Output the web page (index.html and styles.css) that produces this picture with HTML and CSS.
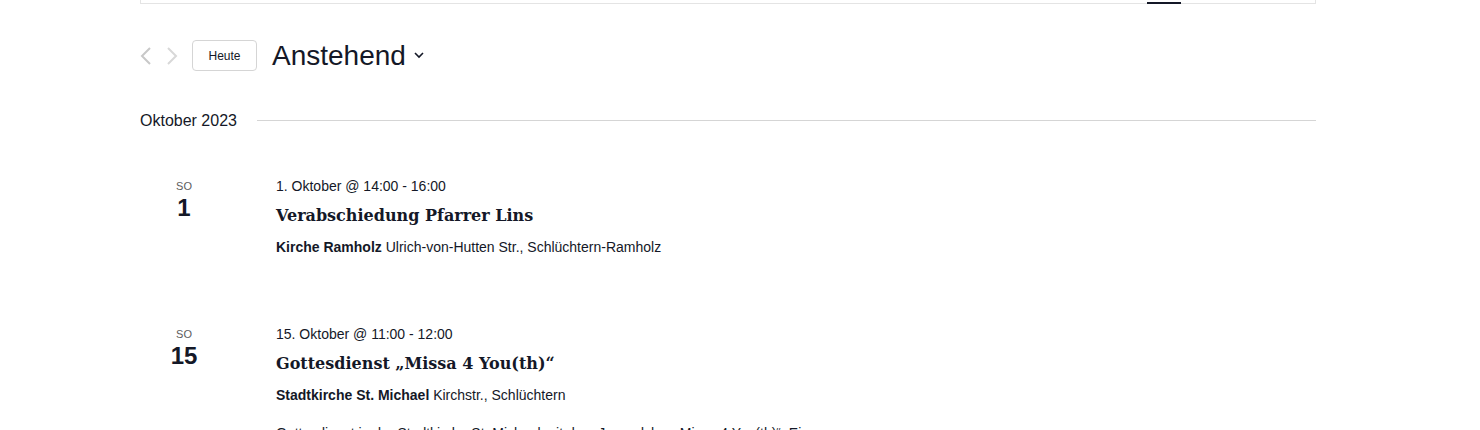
FILE: index.html
```html
<html>
    <head>
        <title>Veranstaltungen</title>
        <link rel="stylesheet" href="styles.css">
    </head>
    <body>
        <div class="events">

            <div class="bar">
                <span class="bar-active"></span>
            </div>

            <div class="nav">
                <a class="arrow prev" href="#"><svg width="12" height="18" viewBox="0 0 12 18"><path d="M10 1 L2 9 L10 17" fill="none" stroke="#c8c8c8" stroke-width="2"/></svg></a>
                <a class="arrow next" href="#"><svg width="12" height="18" viewBox="0 0 12 18"><path d="M2 1 L10 9 L2 17" fill="none" stroke="#d8d8d8" stroke-width="2"/></svg></a>
                <a class="today" href="#">Heute</a>
                <span class="range">Anstehend <svg width="10" height="7" viewBox="0 0 10 7"><path d="M1 1 L5 5 L9 1" fill="none" stroke="#141827" stroke-width="1.6"/></svg></span>
            </div>

            <div class="month">
                <span class="month-name">Oktober 2023</span>
                <span class="month-line"></span>
            </div>

            <div class="event">
                <div class="day">
                    <span class="weekday">So</span>
                    <span class="daynum">1</span>
                </div>
                <div class="details">
                    <div class="time">1. Oktober @ 14:00 - 16:00</div>
                    <h3 class="title"><a href="#">Verabschiedung Pfarrer Lins</a></h3>
                    <div class="venue"><b>Kirche Ramholz</b> Ulrich-von-Hutten Str., Schlüchtern-Ramholz</div>
                </div>
            </div>

            <div class="event">
                <div class="day">
                    <span class="weekday">So</span>
                    <span class="daynum">15</span>
                </div>
                <div class="details">
                    <div class="time">15. Oktober @ 11:00 - 12:00</div>
                    <h3 class="title"><a href="#">Gottesdienst „Missa 4 You(th)“</a></h3>
                    <div class="venue"><b>Stadtkirche St. Michael</b> Kirchstr., Schlüchtern</div>
                    <p class="desc">Gottesdienst in der Stadtkirche St. Michael mit dem Jugendchor „Missa 4 You(th)“. Eine</p>
                </div>
            </div>

        </div>
    </body>
</html>
```

FILE: styles.css
```css
BODY {margin:0; color:#141827; background-color:white; font-family: "Liberation Sans", Arial, Helvetica, sans-serif; font-size:14px;}
A {text-decoration:none; color:#141827;}

.events {width:1176px; margin-left:140px;}

.bar {height:3px; border:1px solid #e4e4e4; border-top:none; display:flex; justify-content:flex-end; padding-right:134px;}
.bar-active {width:34px; height:2px; align-self:flex-end; margin-bottom:-1px; background-color:#141827;}

.nav {display:flex; align-items:center; margin-top:36px; height:31px;}
.arrow {display:flex; width:12px; height:18px;}
.arrow.next {margin-left:14px;}
.today {margin-left:14px; width:63px; height:29px; border:1px solid #d5d5d5; border-radius:4px; display:flex; align-items:center; justify-content:center; font-size:12px;}
.range {margin-left:15px; font-size:28px; display:flex; align-items:center; gap:8px; line-height:31px;}

.month {display:flex; align-items:center; margin-top:37px; height:24px;}
.month-name {font-size:16px; padding-right:20px; padding-top:2px;}
.month-line {flex:1; height:1px; background-color:#d5d5d5;}

.event {display:flex; margin-top:44px; height:97px;}
.event + .event {margin-top:51px;}
.day {width:88px; display:flex; flex-direction:column; align-items:center; padding-top:4px;}
.weekday {font-size:11px; text-transform:uppercase; color:#5d5d5d; line-height:12px;}
.daynum {font-size:24px; font-weight:bold; line-height:26px; margin-top:3px;}
.details {margin-left:48px;}
.time {font-size:14px; line-height:20px;}
.title {margin:8px 0 0 0; font-family:"DejaVu Serif", Georgia, serif; font-size:16px; line-height:24px; font-weight:bold;}
.venue {margin-top:10px; font-size:14px; line-height:18px;}
.desc {margin:19px 0 0 0; font-size:14px; line-height:20px;}
```
